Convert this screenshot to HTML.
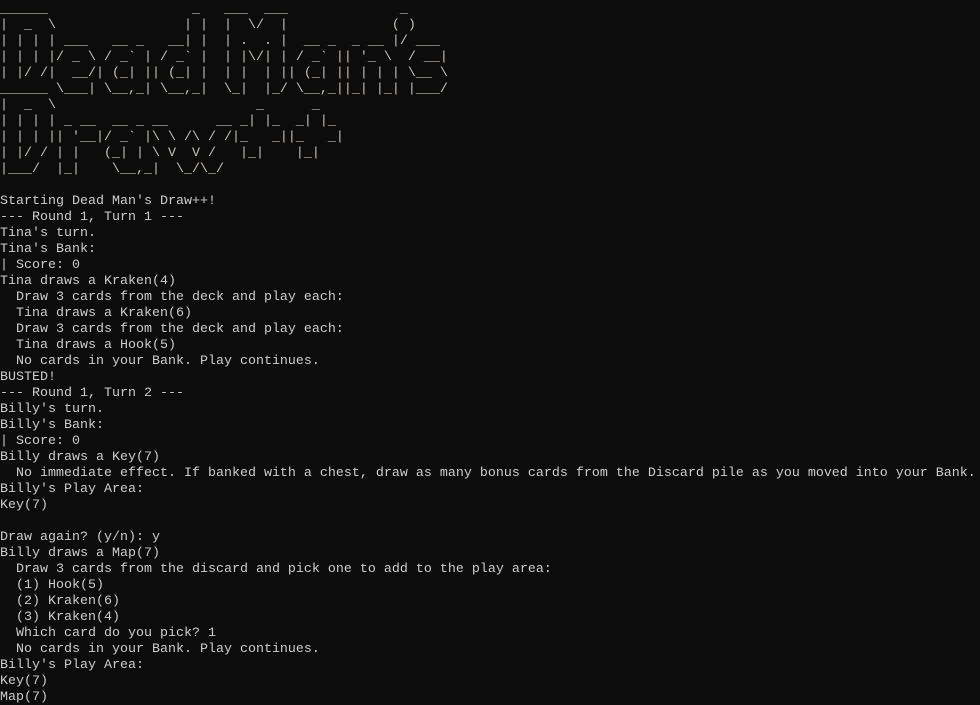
<!DOCTYPE html>
<html>
<head>
<meta charset="utf-8">
<style>
html,body{margin:0;padding:0;background:#0c0c0c;width:980px;height:705px;overflow:hidden;}
pre{margin:0;padding:2px 0 0 0;font-family:"Liberation Mono",monospace;font-size:13.33px;line-height:16px;color:#cccccc;white-space:pre;}
.art{color:#c9c2b6;}
</style>
</head>
<body>
<pre><span class="art">______                  _   ___  ___              _
|  _  \                | |  |  \/  |             ( )
| | | | ___   __ _   __| |  | .  . |  __ _  _ __ |/ ___
| | | |/ _ \ / _` | / _` |  | |\/| | / _` || '_ \  / __|
| |/ /|  __/| (_| || (_| |  | |  | || (_| || | | | \__ \
______ \___| \__,_| \__,_|  \_|  |_/ \__,_||_| |_| |___/
|  _  \                         _      _
| | | | _ __  __ _ __      __ _| |_  _| |_
| | | || '__|/ _` |\ \ /\ / /|_   _||_   _|
| |/ / | |   (_| | \ V  V /   |_|    |_|
|___/  |_|    \__,_|  \_/\_/
</span>
Starting Dead Man's Draw++!
--- Round 1, Turn 1 ---
Tina's turn.
Tina's Bank:
| Score: 0
Tina draws a Kraken(4)
  Draw 3 cards from the deck and play each:
  Tina draws a Kraken(6)
  Draw 3 cards from the deck and play each:
  Tina draws a Hook(5)
  No cards in your Bank. Play continues.
BUSTED!
--- Round 1, Turn 2 ---
Billy's turn.
Billy's Bank:
| Score: 0
Billy draws a Key(7)
  No immediate effect. If banked with a chest, draw as many bonus cards from the Discard pile as you moved into your Bank.
Billy's Play Area:
Key(7)

Draw again? (y/n): y
Billy draws a Map(7)
  Draw 3 cards from the discard and pick one to add to the play area:
  (1) Hook(5)
  (2) Kraken(6)
  (3) Kraken(4)
  Which card do you pick? 1
  No cards in your Bank. Play continues.
Billy's Play Area:
Key(7)
Map(7)</pre>
</body>
</html>
